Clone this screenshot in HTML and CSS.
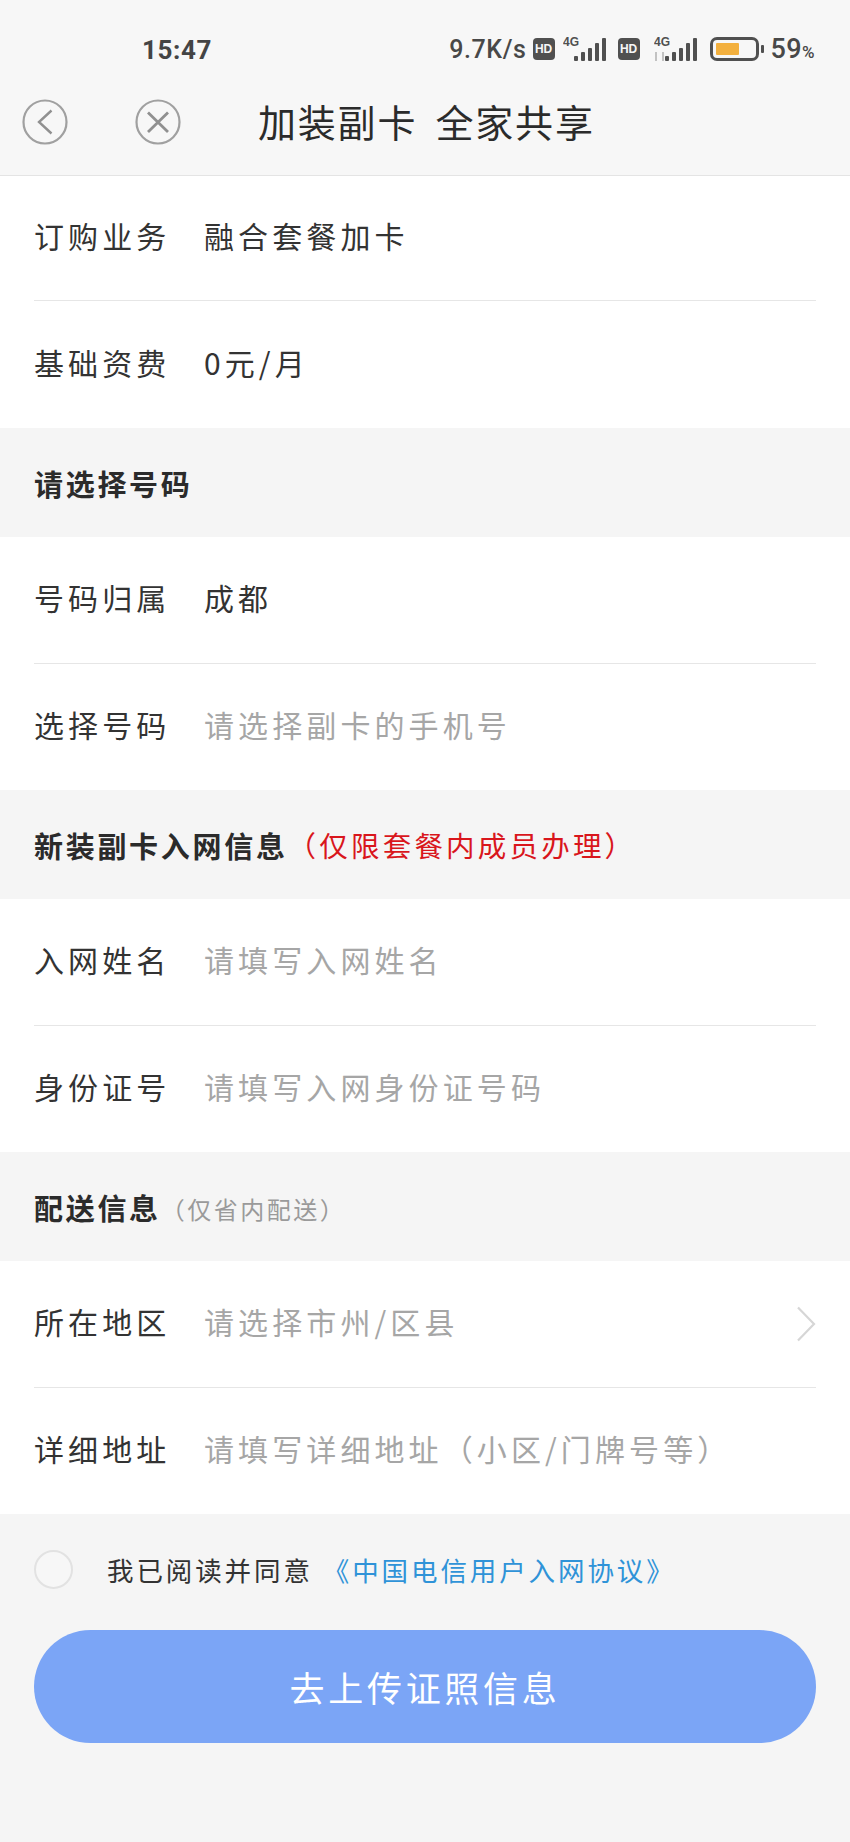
FILE: index.html
```html
<!DOCTYPE html>
<html lang="zh-CN">
<head>
<meta charset="utf-8">
<title>加装副卡 全家共享</title>
<link rel="stylesheet" href="styles.css">
</head>
<body>
<header class="top">
  <div class="status">
    <span class="time">15:47</span>
    <div class="status-right">
      <span class="speed">9.7K/s</span>
      <span class="hd">HD</span>
      <svg class="sig" width="44" height="28" viewBox="0 0 44 28"><text x="0" y="11" class="sig-t">4G</text><g fill="#505050"><rect x="11" y="21" width="4" height="5" rx="1"/><rect x="18" y="17" width="4" height="9" rx="1"/><rect x="25" y="13" width="4" height="13" rx="1"/><rect x="32" y="8" width="4" height="18" rx="1"/><rect x="39" y="3" width="4" height="23" rx="1"/></g></svg>
      <span class="hd hd-b">HD</span>
      <svg class="sig sig-b" width="44" height="28" viewBox="0 0 44 28"><text x="0" y="11" class="sig-t">4G</text><path d="M2 17v9M9 17v9" stroke="#b5b5b5" stroke-width="1.6"/><g fill="#505050"><rect x="11" y="21" width="4" height="5" rx="1"/><rect x="18" y="17" width="4" height="9" rx="1"/><rect x="25" y="13" width="4" height="13" rx="1"/><rect x="32" y="8" width="4" height="18" rx="1"/><rect x="39" y="3" width="4" height="23" rx="1"/></g></svg>
      <span class="batt"><span class="batt-fill"></span></span>
      <span class="nub"></span>
      <span class="pct">59<small>%</small></span>
    </div>
  </div>
  <nav class="nav">
    <svg class="ic-back" width="46" height="46" viewBox="0 0 46 46"><circle cx="23" cy="23" r="21.5" fill="none" stroke="#a0a0a0" stroke-width="2.2"/><path d="M29.5 11.5 17 23 29.5 34.5" fill="none" stroke="#909090" stroke-width="2.4"/></svg>
    <svg class="ic-close" width="46" height="46" viewBox="0 0 46 46"><circle cx="23" cy="23" r="21.5" fill="none" stroke="#a0a0a0" stroke-width="2.2"/><path d="M13 13.5 33 33M33 13.5 13 33" fill="none" stroke="#909090" stroke-width="2.8"/></svg>
    <h1 class="title">加装副卡 全家共享</h1>
  </nav>
</header>

<main>
  <section class="group group-first">
    <div class="row"><span class="label">订购业务</span><span class="val">融合套餐加卡</span></div>
    <div class="row row-last"><span class="label">基础资费</span><span class="val">0元/月</span></div>
  </section>
  <h2 class="sec">请选择号码</h2>
  <section class="group">
    <div class="row"><span class="label">号码归属</span><span class="val">成都</span></div>
    <div class="row row-last"><span class="label">选择号码</span><span class="ph">请选择副卡的手机号</span></div>
  </section>
  <h2 class="sec">新装副卡入网信息<span class="sec-red">（仅限套餐内成员办理）</span></h2>
  <section class="group">
    <div class="row"><span class="label">入网姓名</span><span class="ph">请填写入网姓名</span></div>
    <div class="row row-last"><span class="label">身份证号</span><span class="ph">请填写入网身份证号码</span></div>
  </section>
  <h2 class="sec">配送信息<span class="sec-grey">（仅省内配送）</span></h2>
  <section class="group">
    <div class="row"><span class="label">所在地区</span><span class="ph">请选择市州/区县</span>
      <svg class="arrow" width="20" height="36" viewBox="0 0 20 36"><path d="M2 1.5 18 18 2 34.5" fill="none" stroke="#d6d6d6" stroke-width="2.2"/></svg>
    </div>
    <div class="row row-last"><span class="label">详细地址</span><span class="ph">请填写详细地址（小区/门牌号等）</span></div>
  </section>
  <div class="agree">
    <span class="radio"></span>
    <span class="agree-t">我已阅读并同意</span>
    <span class="agree-l">《中国电信用户入网协议》</span>
  </div>
  <button class="submit">去上传证照信息</button>
</main>
</body>
</html>
```
FILE: styles.css
```css
* { box-sizing: border-box; }
html, body { margin: 0; padding: 0; }
body {
  width: 850px;
  height: 1842px;
  overflow: hidden;
  background: #f5f5f5;
  font-family: "Noto Sans CJK SC", "Noto Sans", sans-serif;
  color: #2b2b2b;
}
.top {
  height: 176px;
  background: #f7f7f7;
  border-bottom: 1px solid #e4e4e4;
}
.status {
  height: 78px;
  padding: 34px 0 0 142px;
  display: flex;
  align-items: flex-start;
  justify-content: space-between;
}
.time {
  font-family: Roboto, sans-serif;
  font-weight: 700;
  font-size: 26px;
  line-height: 32px;
  letter-spacing: 0.6px;
  color: #444;
}
.status-right {
  display: flex;
  align-items: center;
  height: 32px;
  padding-right: 35px;
}
.speed {
  font-family: Roboto, sans-serif;
  font-weight: 500;
  font-size: 25px;
  line-height: 32px;
  letter-spacing: 0.6px;
  color: #484848;
}
.hd {
  width: 22px;
  height: 22px;
  margin-top: -2px;
  margin-left: 6px;
  border-radius: 4px;
  background: #505050;
  color: #f7f7f7;
  font-family: "Liberation Sans", sans-serif;
  font-weight: 700;
  font-size: 12px;
  line-height: 22px;
  text-align: center;
}
.hd-b { margin-left: 11px; }
.sig { margin-left: 8px; margin-top: -2px; }
.sig-b { margin-left: 14px; }
.sig-t {
  font-family: "Liberation Sans", sans-serif;
  font-size: 12px;
  font-weight: 700;
  fill: #505050;
}
.batt {
  width: 49px;
  height: 24px;
  margin-top: -2px;
  margin-left: 12px;
  padding: 3px;
  border: 3px solid #505050;
  border-radius: 7px;
  display: block;
}
.batt-fill {
  display: block;
  width: 23px;
  height: 100%;
  background: #f3b03e;
  border-radius: 1px;
}
.nub {
  width: 3px;
  height: 8px;
  margin-top: -2px;
  margin-left: 2px;
  background: #505050;
  border-radius: 1px;
}
.pct {
  margin-left: 7px;
  font-family: Roboto, sans-serif;
  font-weight: 500;
  font-size: 27px;
  line-height: 32px;
  letter-spacing: 0.4px;
  color: #484848;
}
.pct small { font-size: 17px; }
.nav {
  height: 97px;
  padding: 21px 0 0 22px;
  display: flex;
  align-items: flex-start;
}
.ic-close { margin-left: 67px; }
.title {
  margin: -6px 0 0 77px;
  font-weight: 400;
  font-size: 38px;
  line-height: 56px;
  letter-spacing: 1.8px;
  word-spacing: 8px;
  color: #2b2b2b;
}
.group { background: #fff; }
.row {
  margin-left: 34px;
  margin-right: 34px;
  height: 127px;
  padding-bottom: 6px;
  border-bottom: 1px solid #e6e6e6;
  display: flex;
  align-items: center;
  font-size: 30px;
  letter-spacing: 4.1px;
}
.row-last {
  height: 126px;
  border-bottom: 0;
}
.group-first .row { height: 125px; }
.group-first .row-last { height: 127px; }
.label {
  width: 170px;
  flex: none;
  color: #333;
}
.val { color: #333; }
.ph { color: #a6a6a6; }
.arrow { margin-left: auto; margin-top: 6px; flex: none; }
.sec {
  margin: 0;
  height: 109px;
  padding-left: 34px;
  display: flex;
  align-items: center;
  background: #f5f5f5;
  font-size: 29px;
  font-weight: 700;
  letter-spacing: 2.7px;
  color: #2b2b2b;
}
.sec-red {
  font-size: 28.5px;
  font-weight: 400;
  letter-spacing: 3.2px;
  color: #d9161c;
}
.sec-grey {
  margin-top: 3px;
  font-size: 24px;
  font-weight: 400;
  letter-spacing: 2.5px;
  color: #9a9a9a;
}
.agree {
  height: 116px;
  padding-left: 34px;
  padding-bottom: 5px;
  display: flex;
  align-items: center;
  font-size: 26.5px;
  letter-spacing: 2.9px;
}
.radio {
  width: 39px;
  height: 39px;
  flex: none;
  border: 2px solid #e2e2e2;
  border-radius: 50%;
  background: #f7f7f7;
}
.agree-t { margin-left: 34px; color: #333; }
.agree-l { margin-left: 10px; color: #2f93d8; }
.submit {
  display: block;
  width: 782px;
  height: 113px;
  margin: 0 34px;
  border: 0;
  border-radius: 57px;
  background: #7ba5f6;
  color: #fff;
  font-family: inherit;
  font-size: 35px;
  letter-spacing: 3.7px;
}
```
